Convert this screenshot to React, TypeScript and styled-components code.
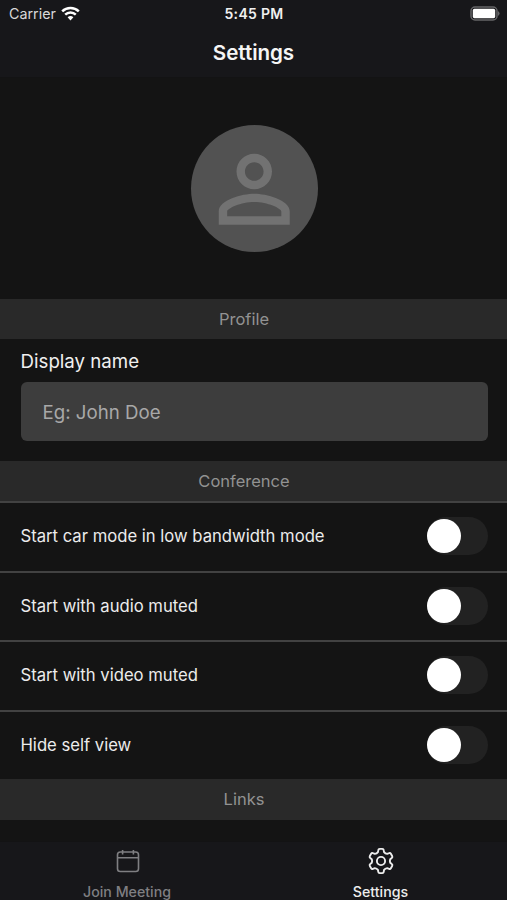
import React from "react";
import styled, { createGlobalStyle } from "styled-components";

const GlobalStyle = createGlobalStyle`
  * { box-sizing: border-box; }
  html, body { margin: 0; background: #141414; }
  body { font-family: Inter, "Liberation Sans", sans-serif; }
`;

const Screen = styled.div`
  width: 507px;
  height: 900px;
  display: flex;
  flex-direction: column;
  overflow: hidden;
  background: #141414;
  color: #ececec;
`;

const Header = styled.header`
  flex: none;
  height: 78px;
  background: #17171a;
  border-bottom: 1px solid #131314;
`;

const StatusBar = styled.div`
  height: 27px;
  display: grid;
  grid-template-columns: 1fr auto 1fr;
  align-items: center;
  padding: 0 7px 0 9px;
`;

const Carrier = styled.div`
  display: flex;
  align-items: center;
  gap: 5px;
  font-size: 14.3px;
  color: #d9d9d9;
`;

const Clock = styled.div`
  margin-right: 1px;
  font-size: 14px;
  font-weight: 600;
  letter-spacing: 0.3px;
  color: #f0f0f0;
`;

const BatterySlot = styled.div`
  display: flex;
  justify-content: flex-end;
`;

const Title = styled.h1`
  margin: 0;
  height: 50px;
  line-height: 51px;
  text-align: center;
  font-size: 20.6px;
  font-weight: 600;
  letter-spacing: -0.05px;
  color: #f5f5f5;
`;

const Content = styled.main`
  flex: 1;
  min-height: 0;
`;

const AvatarArea = styled.div`
  height: 221px;
  display: flex;
  align-items: center;
  justify-content: center;
  padding: 0.5px 0 0 1px;
`;

const Avatar = styled.div`
  width: 127px;
  height: 127px;
  border-radius: 50%;
  background: #525252;
  display: flex;
  align-items: center;
  justify-content: center;
`;

const SectionTitle = styled.h2`
  margin: 0;
  height: 40.4px;
  line-height: 41px;
  padding-right: 19px;
  background: #292929;
  text-align: center;
  font-size: 16.5px;
  font-weight: 400;
  color: #929292;
`;

const Field = styled.label`
  display: block;
  height: 121.2px;
  padding: 10px 19.5px 0 20.5px;
`;

const FieldLabel = styled.span`
  display: block;
  height: 33px;
  line-height: 25.5px;
  font-size: 18.7px;
  color: #f0f0f0;
`;

const TextInput = styled.input`
  display: block;
  width: 100%;
  height: 59px;
  padding: 1px 22px 0;
  border: 0;
  border-radius: 6px;
  outline: none;
  background: #3d3d3d;
  color: #fff;
  font: 400 18.7px Inter, "Liberation Sans", sans-serif;
  &::placeholder { color: #a8a8a8; opacity: 1; }
`;

const SettingRow = styled.div`
  height: 69.6px;
  border-top: 2px solid #424242;
  display: flex;
  align-items: center;
  justify-content: space-between;
  padding: 0 19.5px 1px 20.5px;
  font-size: 16.65px;
`;

const Track = styled.button<{ $on: boolean }>`
  width: 61px;
  height: 38px;
  padding: 2px 0;
  border: 0;
  border-radius: 19px;
  background: ${(p) => (p.$on ? "#3d71eb" : "#222222")};
  display: flex;
  justify-content: ${(p) => (p.$on ? "flex-end" : "flex-start")};
`;

const Thumb = styled.span`
  width: 34px;
  height: 34px;
  border-radius: 50%;
  background: #fff;
`;

const TabBar = styled.nav`
  flex: none;
  height: 59px;
  display: grid;
  grid-template-columns: 254px 253px;
  background: #17171a;
  border-top: 1px solid #131314;
`;

const Tab = styled.div<{ $active?: boolean }>`
  display: flex;
  flex-direction: column;
  align-items: center;
  padding-top: 5px;
  color: ${(p) => (p.$active ? "#ededed" : "#7f7f82")};
  svg { margin-left: 1px; }
`;

const TabLabel = styled.span`
  margin-top: 7.5px;
  line-height: 17px;
  font-size: 14.2px;
  font-weight: 500;
`;

const WifiIcon = () => (
  <svg width="19" height="15" viewBox="0 0 19 15" fill="none" stroke="#fff" strokeWidth="2.5">
    <path d="M1.2 5.3A11.8 11.8 0 0 1 17.8 5.3" />
    <path d="M4.2 8.7A7.6 7.6 0 0 1 14.8 8.7" />
    <path d="M6.6 11.3Q9.5 8.9 12.4 11.3L9.5 14.5Z" fill="#fff" stroke="none" />
  </svg>
);

const BatteryIcon = () => (
  <svg width="30" height="16" viewBox="0 0 30 16">
    <rect x="1" y="1" width="26" height="13" rx="4" fill="none" stroke="#656567" strokeWidth="1.5" />
    <rect x="2.8" y="2.8" width="22.4" height="9.4" rx="1.6" fill="#fff" />
    <path d="M28 5q3.2 2.5 0 5z" fill="#656567" />
  </svg>
);

const PersonIcon = () => (
  <svg width="106.5" height="106.5" viewBox="0 0 24 24" fill="#727272">
    <path d="M12 5.9c1.16 0 2.1.94 2.1 2.1s-.94 2.1-2.1 2.1S9.9 9.16 9.9 8s.94-2.1 2.1-2.1m0 9c2.97 0 6.1 1.46 6.1 2.1v1.1H5.9V17c0-.64 3.13-2.1 6.1-2.1M12 4C9.79 4 8 5.79 8 8s1.79 4 4 4 4-1.79 4-4-1.79-4-4-4zm0 9c-2.67 0-8 1.34-8 4v3h16v-3c0-2.66-5.33-4-8-4z" />
  </svg>
);

const CalendarIcon = () => (
  <svg width="28" height="28" viewBox="0 0 28 28" fill="none" stroke="currentColor" strokeWidth="1.6">
    <rect x="3.5" y="5" width="21" height="19.5" rx="2.8" />
    <path d="M3.5 10.8h21M8.6 3v4.6M19.4 3v4.6" />
  </svg>
);

const polar = (r: number, deg: number) => {
  const a = (deg * Math.PI) / 180;
  return `${(r * Math.sin(a)).toFixed(2)} ${(-r * Math.cos(a)).toFixed(2)}`;
};

const gearPath =
  [0, 60, 120, 180, 240, 300]
    .map(
      (a, i) =>
        `${i === 0 ? `M${polar(9.4, a - 19)}` : ""}L${polar(11.2, a - 14)}` +
        `Q${polar(12.4, a - 12)} ${polar(12.2, a - 6)}L${polar(12.2, a + 6)}` +
        `Q${polar(12.4, a + 12)} ${polar(11.2, a + 14)}L${polar(9.4, a + 19)}` +
        `Q${polar(8.5, a + 30)} ${polar(9.4, a + 41)}`
    )
    .join("") + "Z";

const GearIcon = () => (
  <svg width="28" height="28" viewBox="-14 -14 28 28" fill="none" stroke="currentColor" strokeWidth="1.9" strokeLinejoin="round">
    <path d={gearPath} />
    <circle r="4.1" />
  </svg>
);

const settings = [
  "Start car mode in low bandwidth mode",
  "Start with audio muted",
  "Start with video muted",
  "Hide self view",
];

export default function App() {
  const [enabled, setEnabled] = React.useState<Record<string, boolean>>({});
  return (
    <Screen>
      <GlobalStyle />
      <Header>
        <StatusBar>
          <Carrier>
            Carrier
            <WifiIcon />
          </Carrier>
          <Clock>5:45 PM</Clock>
          <BatterySlot>
            <BatteryIcon />
          </BatterySlot>
        </StatusBar>
        <Title>Settings</Title>
      </Header>
      <Content>
        <AvatarArea>
          <Avatar>
            <PersonIcon />
          </Avatar>
        </AvatarArea>
        <SectionTitle>Profile</SectionTitle>
        <Field>
          <FieldLabel>Display name</FieldLabel>
          <TextInput placeholder="Eg: John Doe" />
        </Field>
        <SectionTitle>Conference</SectionTitle>
        {settings.map((name) => (
          <SettingRow key={name}>
            {name}
            <Track
              $on={!!enabled[name]}
              role="switch"
              aria-checked={!!enabled[name]}
              aria-label={name}
              onClick={() => setEnabled({ ...enabled, [name]: !enabled[name] })}
            >
              <Thumb />
            </Track>
          </SettingRow>
        ))}
        <SectionTitle>Links</SectionTitle>
      </Content>
      <TabBar>
        <Tab>
          <CalendarIcon />
          <TabLabel>Join Meeting</TabLabel>
        </Tab>
        <Tab $active>
          <GearIcon />
          <TabLabel>Settings</TabLabel>
        </Tab>
      </TabBar>
    </Screen>
  );
}
